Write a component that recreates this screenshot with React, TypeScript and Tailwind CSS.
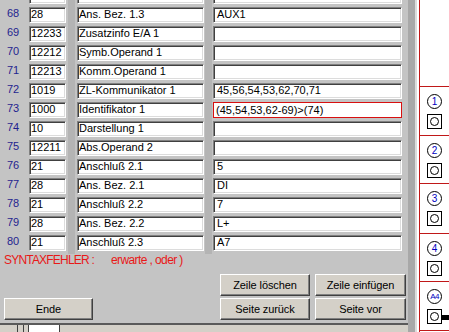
import React from "react";

type Row = { n: number; a: string; b: string; c: string; err?: boolean };

const rows: Row[] = [
  { n: 67, a: "", b: "", c: "" },
  { n: 68, a: "28", b: "Ans. Bez. 1.3", c: "AUX1" },
  { n: 69, a: "12233", b: "Zusatzinfo E/A 1", c: "" },
  { n: 70, a: "12212", b: "Symb.Operand 1", c: "" },
  { n: 71, a: "12213", b: "Komm.Operand 1", c: "" },
  { n: 72, a: "1019", b: "ZL-Kommunikator 1", c: "45,56,54,53,62,70,71" },
  { n: 73, a: "1000", b: "Identifikator 1", c: "(45,54,53,62-69)>(74)", err: true },
  { n: 74, a: "10", b: "Darstellung 1", c: "" },
  { n: 75, a: "12211", b: "Abs.Operand 2", c: "" },
  { n: 76, a: "21", b: "Anschluß 2.1", c: "5" },
  { n: 77, a: "28", b: "Ans. Bez. 2.1", c: "DI" },
  { n: 78, a: "21", b: "Anschluß 2.2", c: "7" },
  { n: 79, a: "28", b: "Ans. Bez. 2.2", c: "L+" },
  { n: 80, a: "21", b: "Anschluß 2.3", c: "A7" },
];

const sunken =
  "h-[16px] bg-white border border-t-[#808080] border-l-[#808080] border-b-white border-r-white shadow-[inset_1px_1px_0_#404040,inset_-1px_-1px_0_#dcdcdc] leading-[12px] whitespace-nowrap overflow-hidden text-black";

function Btn({ label, w }: { label: string; w: string }) {
  return (
    <div
      className={`${w} h-[22px] bg-[#d4d0c8] border border-t-white border-l-white border-b-[#404040] border-r-[#404040] shadow-[inset_-1px_-1px_0_#808080] flex items-center justify-center text-black tracking-[-0.1px]`}
    >
      {label}
    </div>
  );
}

function Cell({ label, h, bar }: { label: string; h: string; bar?: boolean }) {
  return (
    <div className={`${h} border-b border-[#c01818] flex flex-col items-center pt-[7px] gap-[5px]`}>
      <div
        className={`w-[15px] h-[15px] rounded-full border border-black flex items-center justify-center leading-none text-[#0000c0] ${
          bar ? "text-[8px] tracking-[-0.6px]" : "text-[10px]"
        }`}
      >
        {label}
      </div>
      <div className="relative w-[15px] h-[15px] border border-black flex items-center justify-center">
        <div className="w-[9px] h-[9px] rounded-full border border-black" />
        {bar && <div className="absolute left-[14px] top-[5px] w-[10px] h-[5px] bg-black" />}
      </div>
    </div>
  );
}

export default function App() {
  return (
    <div className="flex w-[449px] h-[332px] overflow-hidden font-['Liberation_Sans',Arial,sans-serif] text-[11px] bg-white">
      {/* main window */}
      <div className="flex w-[417px] h-full bg-[#c4c4c4]">
        <div className="w-[408px] h-full flex flex-col">
          <div className="-mt-[12px] flex flex-col">
            {rows.map((r, i) => (
              <div key={r.n} className="flex h-[19px]">
                <div className="w-[29px] pl-[7px] leading-[12px] text-[#1f1f8f]">{i === 0 ? "" : r.n}</div>
                <div className={`w-[37px] pl-[1px] ${sunken}`}>{r.a}</div>
                <div className="w-[2px]" />
                <div className="w-[7px] bg-[#b4b4b4]" />
                <div className="w-[2px]" />
                <div className={`w-[127px] pl-[1px] ${sunken}`}>{r.b}</div>
                <div className="w-[1px]" />
                <div className="w-[7px] bg-[#b4b4b4]" />
                <div className="w-[1px]" />
                {r.err ? (
                  <div className="w-[189px] h-[16px] bg-white border border-[#d81010] pl-[2px] leading-[12px] pt-[1px] whitespace-nowrap overflow-hidden text-black">
                    {r.c}
                  </div>
                ) : (
                  <div className={`w-[189px] pl-[3px] ${sunken}`}>{r.c}</div>
                )}
              </div>
            ))}
          </div>
          <div className="flex leading-[12px] text-[12px] text-[#e81818]">
            <div className="pl-[4px] w-[111px] tracking-[-0.8px]">SYNTAXFEHLER :</div>
            <div className="tracking-[-0.6px]">erwarte , oder )</div>
          </div>
          <div className="mt-[8px] flex justify-end gap-[5px] pr-[2px]">
            <Btn label="Zeile löschen" w="w-[90px]" />
            <Btn label="Zeile einfügen" w="w-[91px]" />
          </div>
          <div className="mt-[2px] flex items-center pr-[2px]">
            <div className="ml-[4px]">
              <Btn label="Ende" w="w-[89px]" />
            </div>
            <div className="flex-1" />
            <div className="flex gap-[5px]">
              <Btn label="Seite zurück" w="w-[90px]" />
              <Btn label="Seite vor" w="w-[91px]" />
            </div>
          </div>
          <div className="mt-[3px] h-[9px] border-t-2 border-[#5a5a5a] bg-[#d4d0c8] flex">
            <div className="w-[17px]" />
            <div className="w-px bg-[#404040]" />
            <div className="w-[5px]" />
            <div className="w-px bg-[#404040]" />
            <div className="w-[4px]" />
            <div className="w-px bg-[#404040]" />
            <div className="w-[31px] bg-white border-r border-[#404040]" />
          </div>
        </div>
        <div className="w-[7px] h-full bg-[#a8a8a8]" />
        <div className="w-[2px] h-full bg-[#dcdcdc]" />
      </div>
      {/* right panel */}
      <div className="flex-1 h-full bg-white pl-[2px]">
        <div className="h-full border-l border-[#c01818] flex flex-col">
          <div className="h-[87px] border-b border-[#c01818]" />
          <Cell label="1" h="h-[49px]" />
          <Cell label="2" h="h-[48px]" />
          <Cell label="3" h="h-[50px]" />
          <Cell label="4" h="h-[48px]" />
          <Cell label="A4" h="h-[49px]" bar />
        </div>
      </div>
    </div>
  );
}
